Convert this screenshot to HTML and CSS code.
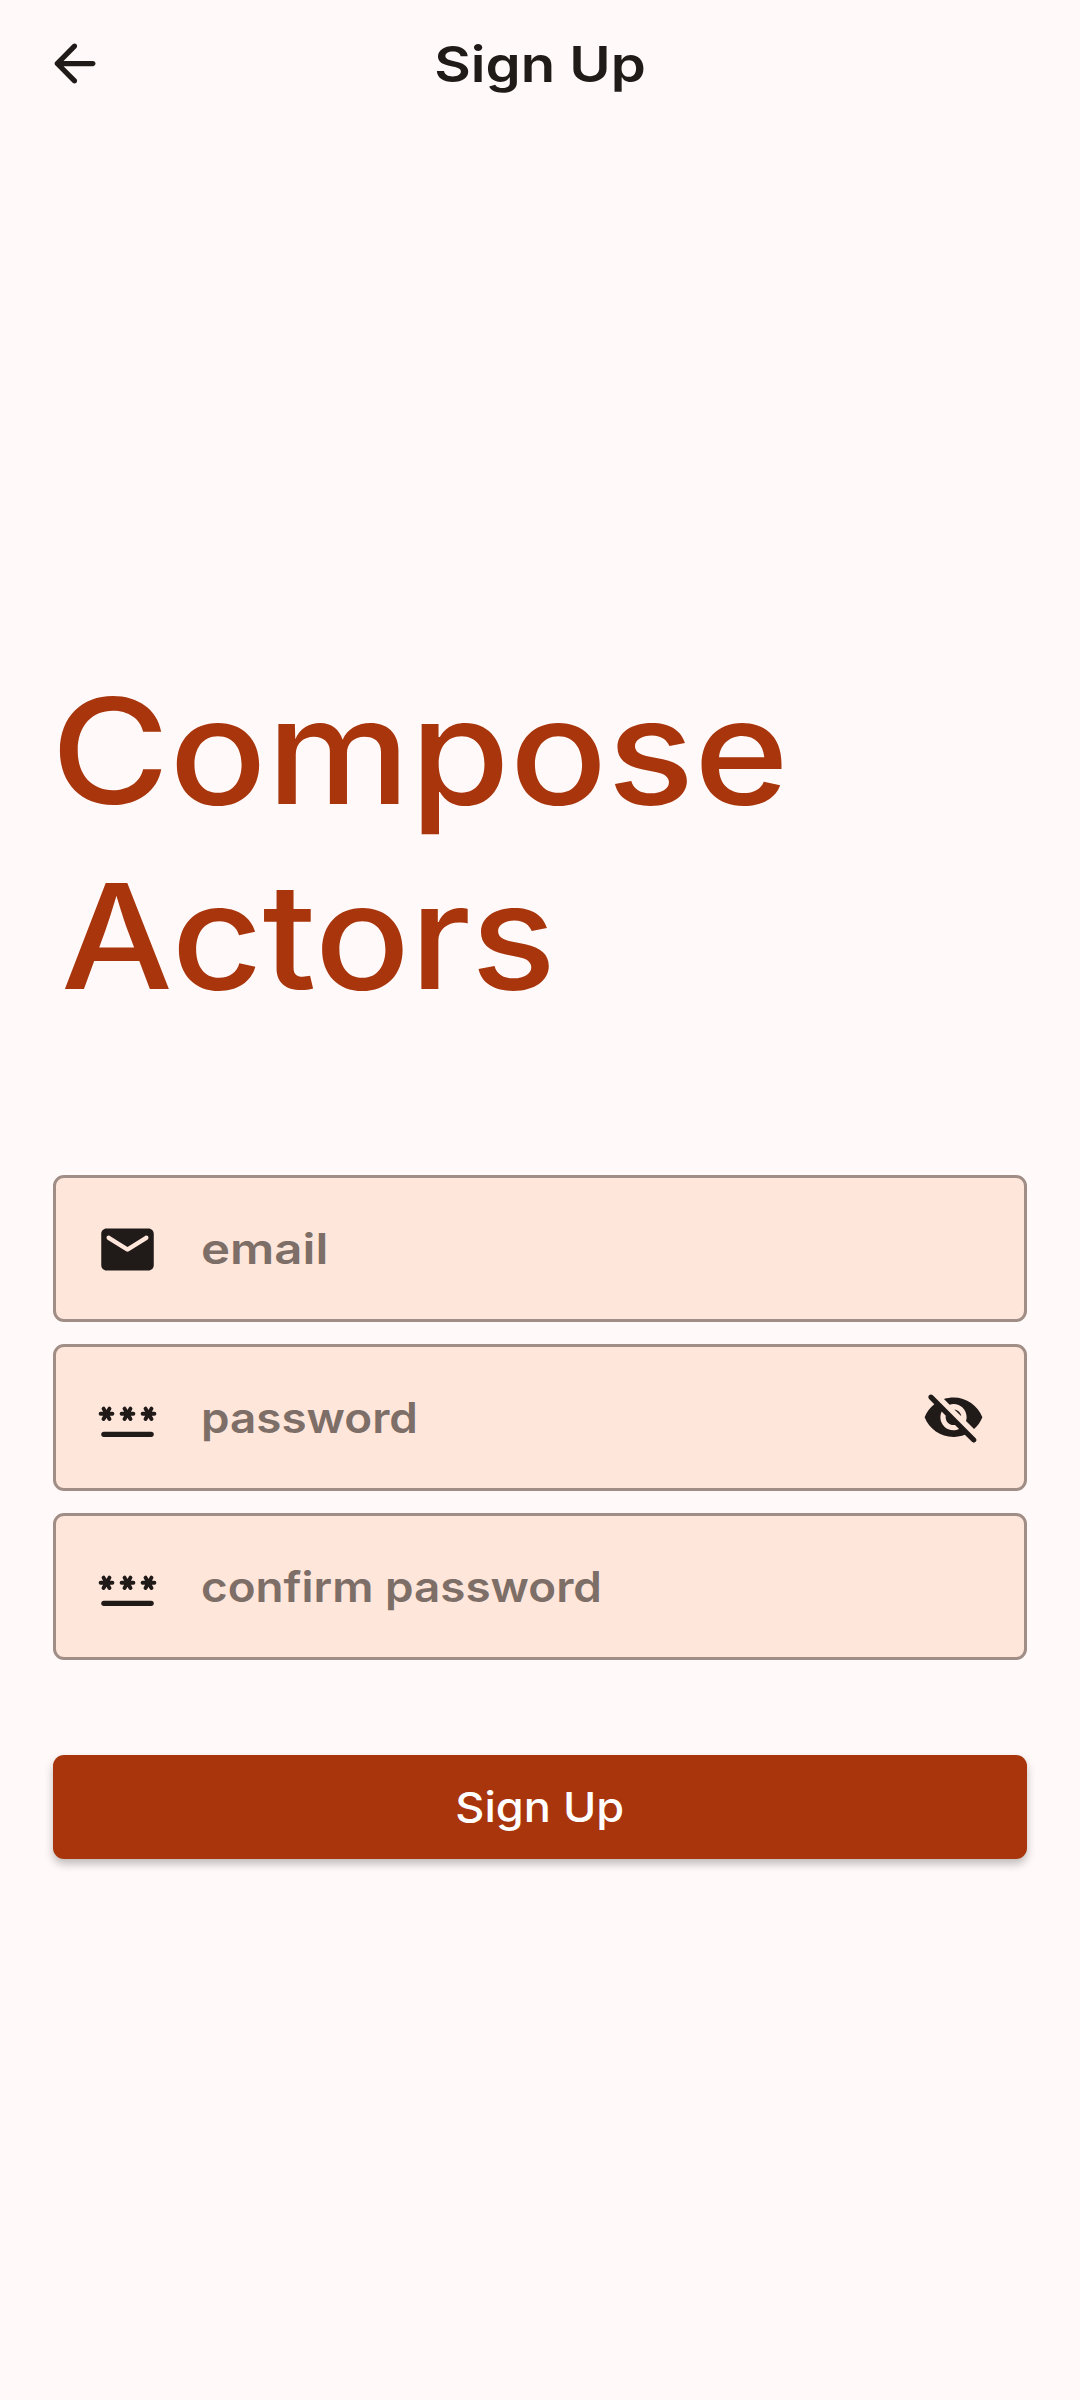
FILE: index.html
```html
<!DOCTYPE html>
<html lang="en">
<head>
<meta charset="utf-8">
<title>Sign Up</title>
<link rel="stylesheet" href="styles.css">
</head>
<body>
<header class="bar">
  <svg class="icon" viewBox="0 0 24 24"><path d="M19 11H7.83l4.88-4.88c.39-.39.39-1.03 0-1.42-.39-.39-1.02-.39-1.41 0l-6.59 6.59c-.39.39-.39 1.02 0 1.41l6.59 6.59c.39.39 1.02.39 1.41 0 .39-.39.39-1.02 0-1.41L7.83 13H19c.55 0 1-.45 1-1s-.45-1-1-1z"/></svg>
  <div class="title">Sign Up</div>
</header>
<main class="content">
  <h1 class="brand"><span class="compose">Compose</span><span class="actors">Actors</span></h1>
  <div class="fields">
    <div class="field">
      <svg class="icon" viewBox="0 0 24 24"><path d="M20 4H4c-1.1 0-2 .9-2 2v12c0 1.1.9 2 2 2h16c1.1 0 2-.9 2-2V6c0-1.1-.9-2-2-2zm-.4 4.25l-7.07 4.42c-.32.2-.74.2-1.06 0L4.4 8.25c-.25-.16-.4-.43-.4-.72 0-.67.73-1.07 1.3-.72L12 11l6.7-4.19c.57-.35 1.3.05 1.3.72 0 .29-.15.56-.4.72z"/></svg>
      <span class="hint email">email</span>
    </div>
    <div class="field">
      <svg class="icon" viewBox="0 0 24 24"><g class="stars"><path d="M1.75 10.2h4.5M2.87 8.24l2.26 3.92M5.13 8.24l-2.26 3.92M9.75 10.2h4.5M10.87 8.24l2.26 3.92M13.13 8.24l-2.26 3.92M17.75 10.2h4.5M18.87 8.24l2.26 3.92M21.13 8.24l-2.26 3.92"/></g><rect x="2" y="17" width="20" height="2" rx="1"/></svg>
      <span class="hint password">password</span>
      <svg class="icon" viewBox="0 0 24 24"><path d="M12 6.5c2.76 0 5 2.24 5 5 0 .51-.1 1-.24 1.46l3.06 3.06c1.39-1.23 2.49-2.77 3.18-4.53C21.27 7.11 17 4 12 4c-1.27 0-2.49.2-3.64.57l2.17 2.17c.47-.14.96-.24 1.47-.24zM2.71 3.16c-.39.39-.39 1.02 0 1.41l1.97 1.97C3.06 7.83 1.77 9.53 1 11.5 2.73 15.89 7 19 12 19c1.52 0 2.97-.3 4.31-.82l2.72 2.72c.39.39 1.02.39 1.41 0 .39-.39.39-1.02 0-1.41L4.13 3.16c-.39-.39-1.03-.39-1.42 0zM12 16.5c-2.76 0-5-2.24-5-5 0-.77.18-1.5.49-2.14l1.57 1.57c-.03.18-.06.37-.06.57 0 1.66 1.34 3 3 3 .2 0 .38-.03.57-.07L14.14 16c-.65.32-1.37.5-2.14.5zm2.97-5.33c-.15-1.4-1.25-2.49-2.64-2.64l2.64 2.64z"/></svg>
    </div>
    <div class="field">
      <svg class="icon" viewBox="0 0 24 24"><g class="stars"><path d="M1.75 10.2h4.5M2.87 8.24l2.26 3.92M5.13 8.24l-2.26 3.92M9.75 10.2h4.5M10.87 8.24l2.26 3.92M13.13 8.24l-2.26 3.92M17.75 10.2h4.5M18.87 8.24l2.26 3.92M21.13 8.24l-2.26 3.92"/></g><rect x="2" y="17" width="20" height="2" rx="1"/></svg>
      <span class="hint confirm">confirm password</span>
    </div>
  </div>
  <button class="submit" type="button"><span class="submit-label">Sign Up</span></button>
</main>
</body>
</html>
```
FILE: styles.css
```css
* { box-sizing: border-box; }
body {
  margin: 0;
  height: 2400px;
  background: #fffaf9;
  color: #201a18;
  font-family: Inter, "Liberation Sans", sans-serif;
}
.icon { width: 63px; height: 63px; flex: none; fill: #201a18; }
.stars { fill: none; stroke: #201a18; stroke-width: 1.5; stroke-linecap: round; }
.bar {
  display: grid;
  grid-template-columns: 63px 1fr 63px;
  align-items: center;
  height: 127px;
  padding: 0 43px;
}
.title {
  text-align: center;
  font-size: 50px;
  font-weight: 560;
  line-height: 60px;
  transform: scaleX(1.125);
}
.content { padding: 532px 53px 0; }
.brand {
  margin: 0;
  display: flex;
  flex-direction: column;
  align-items: flex-start;
  height: 516px;
  color: #a9350d;
  font-size: 146px;
  font-weight: 450;
  line-height: 185px;
}
.compose, .actors { transform-origin: left; }
.compose { margin-left: -2px; transform: scaleX(1.105); }
.actors { margin-left: 8px; transform: scaleX(1.08); }
.fields { display: flex; flex-direction: column; gap: 22px; }
.field {
  display: flex;
  align-items: center;
  height: 147px;
  padding: 0 39px 0 40px;
  border: 3px solid #a08d85;
  border-radius: 11px;
  background: #ffe6db;
}
.field .icon { margin-top: 2px; }
.hint {
  margin-left: 42px;
  margin-right: auto;
  color: #7d6e67;
  font-size: 42px;
  font-weight: 560;
  line-height: 60px;
  transform-origin: left;
}
.email { transform: scaleX(1.17); }
.password { transform: scaleX(1.09); }
.confirm { transform: scaleX(1.09); }
.submit {
  display: block;
  width: 100%;
  height: 104px;
  margin-top: 95px;
  padding: 0;
  border: 0;
  border-radius: 11px;
  background: #a9350d;
  color: #fff;
  font: 450 41px/60px Inter, "Liberation Sans", sans-serif;
  box-shadow: 0 5px 8px rgba(0, 0, 0, .25);
}
.submit-label { display: inline-block; transform: scaleX(1.1); }
```
